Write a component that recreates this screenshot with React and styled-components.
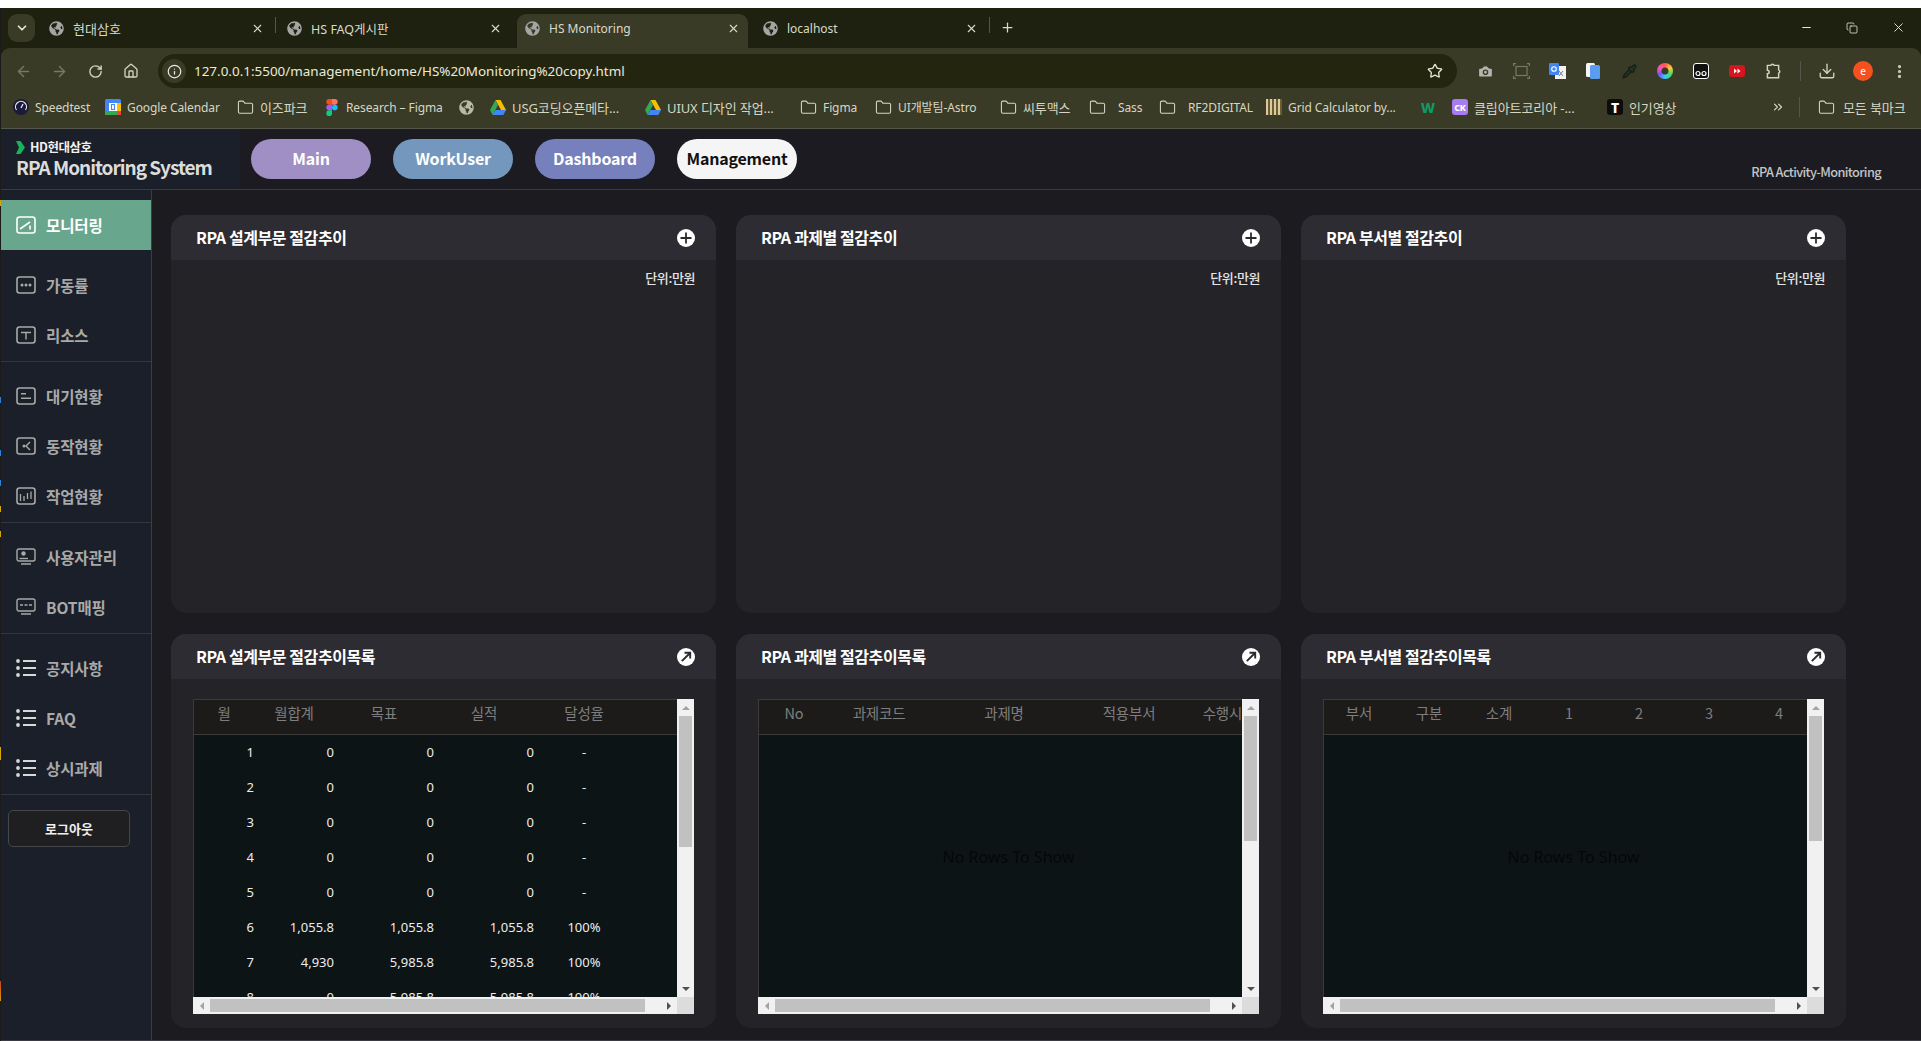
import React from 'react';
import styled, { createGlobalStyle } from 'styled-components';
import { ArrowLeft, ArrowRight, RotateCw, Home, Info, Star, Camera, Download, MoreVertical, Folder, ChevronDown, X, Plus, Minus, Copy, ChevronsRight, Pipette } from 'lucide-react';
import { FaGlobeAmericas } from 'react-icons/fa';

const Global = createGlobalStyle`
  html, body { margin: 0; padding: 0; background: #fff; overflow: hidden; }
  * { box-sizing: border-box; }
  #root { width: 1921px; height: 1041px; }
`;

const CJK = `"Noto Sans CJK KR", "Noto Sans", sans-serif`;
const UI = `"Noto Sans", "Noto Sans CJK KR", sans-serif`;

const Screen = styled.div`width: 1921px; height: 1041px; display: flex; flex-direction: column; overflow: hidden; background: #fff;`;
const TopGap = styled.div`height: 8px; background: #fff; flex: none;`;
const Desk = styled.div`flex: 1; display: flex; min-height: 0;`;
const Edge = styled.div`
  width: 1px; flex: none; background:
    linear-gradient(#d4a800,#d4a800) 0 192px/1px 6px no-repeat,
    linear-gradient(#2a80e0,#2a80e0) 0 389px/1px 6px no-repeat,
    linear-gradient(#2a80e0,#2a80e0) 0 442px/1px 6px no-repeat,
    linear-gradient(#2a80e0,#2a80e0) 0 472px/1px 6px no-repeat,
    linear-gradient(#d4a800,#d4a800) 0 498px/1px 6px no-repeat,
    linear-gradient(#d4a800,#d4a800) 0 523px/1px 6px no-repeat,
    linear-gradient(#d4a800,#d4a800) 0 739px/1px 13px no-repeat,
    linear-gradient(#c8401c,#d49a10) 0 973px/1px 20px no-repeat,
    #1b1b1b;
`;
const Win = styled.div`flex: 1; min-width: 0; display: flex; flex-direction: column; background: #1f2110;`;

/* tab strip */
const TabStrip = styled.div`height: 40px; flex: none; display: flex; align-items: flex-end; padding-left: 7px; color: #d9dac8;`;
const TabMenu = styled.div`width: 27px; height: 28px; margin: 0 6px 6px 0; border-radius: 9px; background: #3a3b26; display: flex; align-items: center; justify-content: center; color: #e6e6d8;`;
const Tab = styled.div`
  width: 231px; height: 34px; display: flex; align-items: center; padding: 0 0 6px 8px; gap: 9px;
  border-radius: 9px 9px 0 0; position: relative;
  background: ${p => (p.$active ? '#3a3b26' : 'transparent')};
  font: ${p => p.$fs || 12}px ${UI}; color: #d9dac8;
  svg.globe { color: #a3a6a3; flex: none; }
`;
const TabLabel = styled.span`flex: 1; white-space: nowrap; overflow: hidden;`;
const TabClose = styled.span`width: 30px; display: flex; justify-content: center; color: #d9dac8;`;
const TabSep = styled.div`width: 1px; height: 16px; margin: 0 3px 15px; background: ${p => (p.$hide ? 'transparent' : '#55564a')};`;
const NewTab = styled.div`margin: 0 0 13px 7px; display: flex; color: #d9dac8;`;
const WinCtrls = styled.div`margin: 0 0 13px auto; display: flex; align-items: center; color: #e6e6d8;`;
const WinBtn = styled.div`width: 46px; display: flex; justify-content: center;`;

/* toolbar */
const Chrome = styled.div`flex: none; height: 81px; background: #3a3b26; border-radius: 9px 9px 0 0; border-bottom: 1px solid #55564a; color: #d2d3bf;`;
const ToolRow = styled.div`height: 40px; padding: 6px 0 0 4px; display: flex; align-items: stretch;`;
const NavBtn = styled.div`width: 36px; display: flex; align-items: center; justify-content: center; color: ${p => (p.$dim ? '#77786a' : '#d2d3bf')};`;
const Address = styled.div`width: 1299px; margin: 0 10px 0 9px; border-radius: 17px; background: #23250f; display: flex; align-items: center; padding: 0 14px 0 4px; font: 13.45px ${UI}; color: #e9e9dc;`;
const InfoChip = styled.div`width: 24px; height: 24px; border-radius: 50%; background: #3a3b26; display: flex; align-items: center; justify-content: center; margin-right: 8px;`;
const Url = styled.span`flex: 1; white-space: nowrap;`;
const ToolSep = styled.div`width: 1px; height: 20px; align-self: center; margin: 0 8px 0 9px; background: #55564a;`;
const Avatar = styled.div`width: 20px; height: 20px; border-radius: 50%; background: #f4511e; color: #fff; font: 10px ${UI}; display: flex; align-items: center; justify-content: center;`;
const ColorRing = styled.div`width: 16px; height: 16px; border-radius: 50%; background: radial-gradient(circle, #3a3b26 0 3px, transparent 4px), conic-gradient(#f55, #fc3, #4d6, #3cf, #75f, #f5a, #f55);`;

const BookRow = styled.div`height: 40px; display: flex; align-items: center; padding: 0 0 2px 12px; font: 12px ${UI}; letter-spacing: -0.1px; color: #d6d6c4;`;
const Book = styled.div`width: ${p => p.$w}px; flex: none; display: flex; align-items: center; gap: ${p => p.$gap || 6}px; font-size: ${p => (p.$ko ? 13 : 12)}px; white-space: nowrap; overflow: hidden; svg { flex: none; }`;
const BookIcon = styled.div`width: 16px; height: 16px; flex: none; border-radius: ${p => p.$r || 3}px; background: ${p => p.$bg}; color: ${p => p.$c || '#fff'}; font: 800 ${p => p.$fs || 9}px ${UI}; display: flex; align-items: center; justify-content: center; overflow: hidden;`;
const BookSep = styled.div`width: 1px; height: 20px; margin: 0 18px 0 14px; background: #55564a;`;
const GridStripes = styled.div`width: 16px; height: 16px; flex: none; background: repeating-linear-gradient(90deg, #d8c9a0 0 2px, #6b5c30 2px 4px);`;
const WMark = styled.span`width: 16px; flex: none; color: #0f9a66; font: 800 14px ${UI};`;

/* page */
const Page = styled.div`flex: 1; min-height: 0; display: flex; flex-direction: column; background: #1b1b20; border-bottom: 1px solid #3a3a44;`;
const Header = styled.header`height: 61px; flex: none; display: flex; border-bottom: 1px solid #3a3a44; background: #1b1b21;`;
const Logo = styled.div`width: 239px; flex: none; background: #1a1f29; padding: 10px 0 0 15px; color: #e4e4e4;`;
const LogoTop = styled.div`display: flex; align-items: center; gap: 5px; font: 700 12.5px/16px ${CJK}; letter-spacing: -0.5px; color: #f2f2f2;`;
const LogoName = styled.div`font: 700 19px/24px ${CJK}; letter-spacing: -1.02px; color: #dcdcdc; white-space: nowrap;`;
const Pills = styled.nav`display: flex; gap: 22px; padding: 10px 0 0 11px;`;
const Pill = styled.div`width: 120px; height: 40px; border-radius: 20px; background: ${p => p.$bg}; color: ${p => p.$c || '#fff'}; font: 700 16px/38px ${CJK}; text-align: center; letter-spacing: -0.2px;`;
const HeaderNote = styled.div`margin-left: auto; padding: 34px 40px 0 0; font: 500 12.75px/18px ${CJK}; letter-spacing: -0.62px; color: #c4c4c4;`;

const Content = styled.div`flex: 1; min-height: 0; display: flex;`;
const Side = styled.aside`width: 151px; flex: none; background: #1a1f29; border-right: 1px solid #3a3d45;`;
const Group = styled.div`padding-top: 10px; border-bottom: 1px solid #33363d;`;
const Item = styled.div`
  height: 50px; display: flex; align-items: center; gap: 10px; padding: 0 0 ${p => (p.$active ? 0 : 2)}px 15px;
  margin-bottom: ${p => (p.$active ? 11 : 0)}px;
  background: ${p => (p.$active ? '#68a78e' : 'transparent')};
  color: ${p => (p.$active ? '#fff' : '#a9a9a9')};
  font: 700 15.5px ${CJK}; letter-spacing: -0.1px;
`;
const LogoutWrap = styled.div`padding: 15px 21px 0 7px;`;
const Logout = styled.div`height: 37px; border: 1px solid #44464c; border-radius: 5px; background: #1f1f21; color: #f0f0f0; font: 700 13px/35px ${CJK}; text-align: center;`;

const Main = styled.main`flex: 1; min-width: 0; padding: 25px 0 0 19px; display: grid; grid-template-columns: repeat(3, 545px); grid-template-rows: 398px 394px; column-gap: 20px; row-gap: 21px;`;
const Card = styled.section`border-radius: 15px; background: #232328; overflow: hidden; display: flex; flex-direction: column;`;
const CardHead = styled.div`height: 45px; flex: none; background: #2c2c32; display: flex; align-items: center; justify-content: space-between; padding: 0 21px 0 25px;`;
const CardTitle = styled.h3`margin: 0 0 2px; font: 700 16px ${CJK}; letter-spacing: -0.42px; color: #fff;`;
const Unit = styled.div`padding: 9px 21px 0 0; text-align: right; font: 500 13px/18px ${CJK}; letter-spacing: -0.4px; color: #e4e4e4;`;
const CardBody = styled.div`flex: 1; padding: 20px 22px 14px; min-height: 0;`;

const GridBox = styled.div`height: 315px; display: grid; grid-template-columns: 484px 17px; grid-template-rows: 298px 17px;`;
const Viewport = styled.div`overflow: hidden; border-left: 1px solid #3a3a3a; border-top: 1px solid #3a3a3a; background: #0c1416; display: flex; flex-direction: column;`;
const HeadRow = styled.div`height: 35px; flex: none; display: flex; background: #1c1b1a; border-bottom: 1px solid #3a3a3a;`;
const HeadCell = styled.div`width: ${p => p.$w}px; flex: none; padding-right: ${p => p.$pr || 0}px; text-align: center; font: 400 14.5px/26px ${CJK}; letter-spacing: -0.2px; color: #7e7e7e; white-space: nowrap;`;
const DataRow = styled.div`height: 35px; flex: none; display: flex; font: 400 13px/35px ${UI}; color: #ececec;`;
const DataCell = styled.div`width: ${p => p.$w}px; flex: none; padding-right: ${p => p.$pr || 0}px; text-align: ${p => p.$al || 'right'};`;
const Empty = styled.div`flex: 1; display: flex; align-items: center; justify-content: center; padding: 0 0 18px 16px; font: 400 16px ${UI}; color: #050808;`;

const VBar = styled.div`background: #f1f1f1; display: flex; flex-direction: column; align-items: center; padding-bottom: 0;`;
const HBar = styled.div`background: #f1f1f1; display: flex; align-items: center;`;
const Corner = styled.div`background: #dcdcdc;`;
const ArrowBox = styled.div`flex: none; width: ${p => p.$w}px; height: ${p => p.$h}px; display: flex; align-items: center; justify-content: center; margin-top: ${p => p.$mt || 0}px;`;
const Tri = styled.div`
  width: 0; height: 0;
  ${p => p.$dir === 'up' && `border-left: 4px solid transparent; border-right: 4px solid transparent; border-bottom: 4px solid ${p.$c};`}
  ${p => p.$dir === 'down' && `border-left: 4px solid transparent; border-right: 4px solid transparent; border-top: 4px solid ${p.$c};`}
  ${p => p.$dir === 'left' && `border-top: 4px solid transparent; border-bottom: 4px solid transparent; border-right: 4px solid ${p.$c};`}
  ${p => p.$dir === 'right' && `border-top: 4px solid transparent; border-bottom: 4px solid transparent; border-left: 4px solid ${p.$c};`}
`;
const VThumb = styled.div`width: 13px; height: ${p => p.$h}px; flex: none; background: #c1c1c1;`;
const HThumb = styled.div`width: 435px; height: 13px; flex: none; background: #c1c1c1;`;
const Spacer = styled.div`flex: 1;`;

/* icons */
const SideIcon = ({ kind }) => {
  const frame = <rect x="1" y="1" width="18" height="16" rx="2.5" fill="none" stroke="currentColor" strokeWidth="1.6" />;
  const inner = {
    monitor: <><path d="M4 13 L14 6" stroke="currentColor" strokeWidth="1.6" /><path d="M14 9.5 V13.5" stroke="currentColor" strokeWidth="1.6" /></>,
    dots: <><circle cx="6" cy="9" r="1.5" fill="currentColor" /><circle cx="10" cy="9" r="1.5" fill="currentColor" /><circle cx="14" cy="9" r="1.5" fill="currentColor" /></>,
    cross: <path d="M5 6.5 H15 M10 6.5 V13.5" stroke="currentColor" strokeWidth="1.4" fill="none" />,
    wait: <path d="M5 6.8 H10 M5 11.2 H15" stroke="currentColor" strokeWidth="1.4" fill="none" />,
    action: <><circle cx="8" cy="9" r="1.5" fill="currentColor" /><path d="M14 5 L10 9 L14 13" stroke="currentColor" strokeWidth="1.4" fill="none" /></>,
    bars: <path d="M4.5 7 V14 M8 9 V14 M11.5 6 V12 M15 4.5 V12" stroke="currentColor" strokeWidth="1.3" fill="none" />,
  };
  if (kind === 'user' || kind === 'bot') {
    return (
      <svg width="20" height="19" viewBox="0 0 20 19">
        <path d="M3 1 H17 a2 2 0 0 1 2 2 V11 a2 2 0 0 1 -2 2 H3 a2 2 0 0 1 -2 -2 V3 a2 2 0 0 1 2 -2 Z" fill="none" stroke="currentColor" strokeWidth="1.4" />
        <path d="M5 16 H15" stroke="currentColor" strokeWidth="1.5" />
        {kind === 'user'
          ? <><circle cx="7.5" cy="5.5" r="2.2" fill="currentColor" /><path d="M3.5 10.5 H12" stroke="currentColor" strokeWidth="1.4" /></>
          : <path d="M4 7 H7 M8.5 7 H11.5 M13 7 H16" stroke="currentColor" strokeWidth="1.3" />}
      </svg>
    );
  }
  if (kind === 'list') {
    return (
      <svg width="20" height="18" viewBox="0 0 20 18" style={{ color: '#d8d8d8' }}>
        <circle cx="2" cy="2" r="1.9" fill="currentColor" /><circle cx="2" cy="9" r="1.9" fill="currentColor" /><circle cx="2" cy="16" r="1.9" fill="currentColor" />
        <path d="M7 2 H20 M7 9 H20 M7 16 H20" stroke="currentColor" strokeWidth="2" />
      </svg>
    );
  }
  return <svg width="20" height="18" viewBox="0 0 20 18">{frame}{inner[kind]}</svg>;
};

const PlusIcon = () => (
  <svg width="18" height="18" viewBox="0 0 18 18"><circle cx="9" cy="9" r="9" fill="#fff" /><path d="M3.5 9 H14.5 M9 3.5 V14.5" stroke="#2b2b30" strokeWidth="1.8" /></svg>
);
const OpenIcon = () => (
  <svg width="18" height="18" viewBox="0 0 18 18"><circle cx="9" cy="9" r="9" fill="#fff" /><path d="M4.8 13.2 L12.5 5.5 M7.5 4.8 H13.2 V10.5" stroke="#2b2b30" strokeWidth="1.9" fill="none" /></svg>
);
const Globe = ({ size = 15 }) => <FaGlobeAmericas className="globe" size={size} />;
const FolderI = () => <Folder size={17} strokeWidth={1.5} />;
const FigmaI = () => (
  <svg width="12" height="17" viewBox="0 0 12 18" style={{ margin: '0 2px' }}>
    <path d="M6 0 H3 a3 3 0 0 0 0 6 H6 Z" fill="#f24e1e" /><path d="M6 0 H9 a3 3 0 0 1 0 6 H6 Z" fill="#ff7262" />
    <path d="M6 6 H3 a3 3 0 0 0 0 6 H6 Z" fill="#a259ff" /><circle cx="9" cy="9" r="3" fill="#1abcfe" />
    <path d="M6 12 H3 a3 3 0 1 0 3 3 Z" fill="#0acf83" />
  </svg>
);
const DriveI = () => (
  <svg width="16" height="15" viewBox="0 0 16 15">
    <path d="M5.5 0 H10.5 L16 10 H11 Z" fill="#fbbc04" /><path d="M5.5 0 L0 10 L2.6 15 L8 5 Z" fill="#34a853" /><path d="M2.6 15 H13.4 L16 10 H5.4 Z" fill="#4285f4" />
  </svg>
);
const SpeedI = () => (
  <svg width="16" height="16" viewBox="0 0 16 16"><circle cx="8" cy="8" r="8" fill="#1a1a3a" /><path d="M3.5 11 A5.5 5.5 0 1 1 12.5 11" stroke="#e8e8f0" strokeWidth="1.2" fill="none" /><path d="M8 9 L10 5" stroke="#e8e8f0" strokeWidth="1.2" /></svg>
);
const CalI = () => (
  <svg width="16" height="16" viewBox="0 0 16 16"><rect width="16" height="16" rx="1.5" fill="#4285f4" /><rect x="0" y="12" width="12" height="4" fill="#34a853" /><rect x="12" y="12" width="4" height="4" fill="#ea4335" /><rect x="12" y="4" width="4" height="8" fill="#fbbc04" /><rect x="4" y="4" width="8" height="8" fill="#fff" /><rect x="6.5" y="5.5" width="3" height="5" fill="none" stroke="#4285f4" strokeWidth="1.1" /></svg>
);
const CaptureI = () => (
  <svg width="17" height="16" viewBox="0 0 17 16" fill="none" stroke="#77786a" strokeWidth="1.2"><rect x="3" y="3.5" width="11" height="9" /><path d="M0.6 3 V0.6 H3 M14 0.6 H16.4 V3 M16.4 13 V15.4 H14 M3 15.4 H0.6 V13" /></svg>
);
const TranslateI = () => (
  <svg width="17" height="17" viewBox="0 0 17 17"><rect x="6" y="3" width="11" height="13" fill="#f1f1f1" /><rect width="10" height="12" rx="1" fill="#4285f4" /><circle cx="5" cy="6" r="2.3" fill="none" stroke="#fff" strokeWidth="1.1" /><path d="M10 8 L14 13 M14 8 L10 13" stroke="#7a7a7a" strokeWidth="1" /></svg>
);
const PagesI = () => (
  <svg width="14" height="16" viewBox="0 0 14 16"><rect x="0" y="0" width="9" height="14" rx="1.5" fill="#f5f5f5" /><rect x="4" y="2" width="10" height="14" rx="1.5" fill="#5b9bf0" /></svg>
);
const FaceI = () => (
  <svg width="16" height="16" viewBox="0 0 16 16"><rect x="0.5" y="0.5" width="15" height="15" rx="2.5" fill="#111" stroke="#fff" /><circle cx="5" cy="10.5" r="2" fill="none" stroke="#fff" strokeWidth="1.2" /><circle cx="11" cy="10.5" r="2" fill="none" stroke="#fff" strokeWidth="1.2" /></svg>
);
const RedI = () => (
  <svg width="16" height="12" viewBox="0 0 16 12"><rect width="16" height="12" rx="3" fill="#d8141c" /><path d="M5 3.5 L8 6 L5 8.5 Z M8.5 3.5 L11.5 6 L8.5 8.5 Z" fill="#fff" /></svg>
);
const PuzzleI = () => (
  <svg width="18" height="18" viewBox="0 0 16 16" fill="none" stroke="#d2d3bf" strokeWidth="1.3"><path d="M3 3 H6 a1.6 1.6 0 0 1 3 0 H13 V7 a1.6 1.6 0 0 1 0 3 V14 H3 V10.5 a1.6 1.6 0 0 0 0 -3.2 Z" /></svg>
);
const HdMark = () => <svg width="9" height="13" viewBox="0 0 9 13"><path d="M0 0 H4.5 L9 6.5 L4.5 13 H0 L3 6.5 Z" fill="#19b45a" /></svg>;

const TABS = [
  { t: '현대삼호', fs: 13 }, { t: 'HS FAQ게시판', fs: 12.5 }, { t: 'HS Monitoring', active: true }, { t: 'localhost' },
];

const BOOKS = [
  { w: 92, icon: <SpeedI />, t: 'Speedtest' },
  { w: 132, icon: <CalI />, t: 'Google Calendar' },
  { w: 87, icon: <FolderI />, t: '이즈파크', ko: true },
  { w: 135, icon: <FigmaI />, t: 'Research – Figma' },
  { w: 31, icon: <FaGlobeAmericas size={15} color="#b8b9aa" />, t: '' },
  { w: 155, icon: <DriveI />, t: 'USG코딩오픈메타...', ko: true },
  { w: 155, icon: <DriveI />, t: 'UIUX 디자인 작업...', ko: true },
  { w: 75, icon: <FolderI />, t: 'Figma' },
  { w: 125, icon: <FolderI />, t: 'UI개발팀-Astro' },
  { w: 89, icon: <FolderI />, t: '씨투맥스', ko: true },
  { w: 70, icon: <FolderI />, gap: 12, t: 'Sass' },
  { w: 107, icon: <FolderI />, gap: 12, t: 'RF2DIGITAL' },
  { w: 155, icon: <GridStripes />, t: 'Grid Calculator by...' },
  { w: 31, icon: <WMark>W</WMark>, t: '' },
  { w: 155, icon: <BookIcon $bg="#a77bf3">CK</BookIcon>, t: '클립아트코리아 -...', ko: true },
  { w: 164, icon: <BookIcon $bg="#0c0c0c" $r={0} $fs={14}>T</BookIcon>, t: '인기영상', ko: true },
];

const NAV = [
  [{ k: 'monitor', t: '모니터링', active: true }, { k: 'dots', t: '가동률' }, { k: 'cross', t: '리소스' }],
  [{ k: 'wait', t: '대기현황' }, { k: 'action', t: '동작현황' }, { k: 'bars', t: '작업현황' }],
  [{ k: 'user', t: '사용자관리' }, { k: 'bot', t: 'BOT매핑' }],
  [{ k: 'list', t: '공지사항' }, { k: 'list', t: 'FAQ' }, { k: 'list', t: '상시과제' }],
];

const ROWS = [
  ['1', '0', '0', '0', '-'], ['2', '0', '0', '0', '-'], ['3', '0', '0', '0', '-'], ['4', '0', '0', '0', '-'], ['5', '0', '0', '0', '-'],
  ['6', '1,055.8', '1,055.8', '1,055.8', '100%'], ['7', '4,930', '5,985.8', '5,985.8', '100%'], ['8', '0', '5,985.8', '5,985.8', '100%'],
];
const COLS1 = [
  { t: '월', w: 70, hp: 10, dp: 10 }, { t: '월합계', w: 80, hp: 20, dp: 10 }, { t: '목표', w: 100, hp: 20, dp: 10 },
  { t: '실적', w: 100, hp: 20, dp: 10 }, { t: '달성율', w: 80, hp: 0, dp: 0, al: 'center' },
];
const COLS2 = [{ t: 'No', w: 70 }, { t: '과제코드', w: 100 }, { t: '과제명', w: 150 }, { t: '적용부서', w: 100 }, { t: '수행시간', w: 100 }];
const COLS3 = ['부서', '구분', '소계', '1', '2', '3', '4'].map(t => ({ t, w: 70 }));

const DataGrid = ({ cols, rows, thumb }) => (
  <GridBox>
    <Viewport>
      <HeadRow>{cols.map(c => <HeadCell key={c.t} $w={c.w} $pr={c.hp}>{c.t}</HeadCell>)}</HeadRow>
      {rows
        ? rows.map(r => (
          <DataRow key={r[0]}>
            {r.map((v, i) => <DataCell key={i} $w={cols[i].w} $pr={cols[i].dp} $al={cols[i].al}>{v}</DataCell>)}
          </DataRow>
        ))
        : <Empty>No Rows To Show</Empty>}
    </Viewport>
    <VBar>
      <ArrowBox $w={17} $h={17}><Tri $dir="up" $c="#a3a3a3" /></ArrowBox>
      <VThumb $h={thumb} />
      <Spacer />
      <ArrowBox $w={17} $h={17}><Tri $dir="down" $c="#505050" /></ArrowBox>
    </VBar>
    <HBar>
      <ArrowBox $w={17} $h={17}><Tri $dir="left" $c="#a3a3a3" /></ArrowBox>
      <HThumb />
      <Spacer />
      <ArrowBox $w={17} $h={17}><Tri $dir="right" $c="#505050" /></ArrowBox>
    </HBar>
    <Corner />
  </GridBox>
);

const ChartCard = ({ title }) => (
  <Card>
    <CardHead><CardTitle>{title}</CardTitle><PlusIcon /></CardHead>
    <Unit>단위:만원</Unit>
  </Card>
);
const ListCard = ({ title, cols, rows, thumb }) => (
  <Card>
    <CardHead><CardTitle>{title}</CardTitle><OpenIcon /></CardHead>
    <CardBody><DataGrid cols={cols} rows={rows} thumb={thumb} /></CardBody>
  </Card>
);

export default function App() {
  return (
    <Screen>
      <Global />
      <TopGap />
      <Desk>
        <Edge />
        <Win>
          <TabStrip>
            <TabMenu><ChevronDown size={14} strokeWidth={3} /></TabMenu>
            {TABS.map((tab, i) => (
              <React.Fragment key={tab.t}>
                <Tab $active={tab.active} $fs={tab.fs}>
                  <Globe />
                  <TabLabel>{tab.t}</TabLabel>
                  <TabClose><X size={13} strokeWidth={2} /></TabClose>
                </Tab>
                <TabSep $hide={i === 1 || i === 2} />
              </React.Fragment>
            ))}
            <NewTab><Plus size={15} strokeWidth={2} /></NewTab>
            <WinCtrls>
              <WinBtn><Minus size={13} /></WinBtn>
              <WinBtn><Copy size={12} strokeWidth={1.6} /></WinBtn>
              <WinBtn><X size={15} strokeWidth={1.5} /></WinBtn>
            </WinCtrls>
          </TabStrip>
          <Chrome>
            <ToolRow>
              <NavBtn $dim><ArrowLeft size={17} /></NavBtn>
              <NavBtn $dim><ArrowRight size={17} /></NavBtn>
              <NavBtn><RotateCw size={15} strokeWidth={2.2} /></NavBtn>
              <NavBtn><Home size={16} strokeWidth={2} /></NavBtn>
              <Address>
                <InfoChip><Info size={15} strokeWidth={2} /></InfoChip>
                <Url>127.0.0.1:5500/management/home/HS%20Monitoring%20copy.html</Url>
                <Star size={16} strokeWidth={2} color="#e4e4d4" />
              </Address>
              <NavBtn><Camera size={17} fill="#b5b5b0" color="#3a3b26" /></NavBtn>
              <NavBtn><CaptureI /></NavBtn>
              <NavBtn><TranslateI /></NavBtn>
              <NavBtn><PagesI /></NavBtn>
              <NavBtn><Pipette size={15} strokeWidth={2.6} color="#10201a" /></NavBtn>
              <NavBtn><ColorRing /></NavBtn>
              <NavBtn><FaceI /></NavBtn>
              <NavBtn><RedI /></NavBtn>
              <NavBtn><PuzzleI /></NavBtn>
              <ToolSep />
              <NavBtn><Download size={18} strokeWidth={1.8} /></NavBtn>
              <NavBtn><Avatar>e</Avatar></NavBtn>
              <NavBtn><MoreVertical size={17} strokeWidth={2.5} /></NavBtn>
            </ToolRow>
            <BookRow>
              {BOOKS.map((b, i) => <Book key={i} $w={b.w} $gap={b.gap} $ko={b.ko}>{b.icon}{b.t}</Book>)}
              <ChevronsRight size={14} />
              <BookSep />
              <Book $w={90} $gap={8} $ko><FolderI />모든 북마크</Book>
            </BookRow>
          </Chrome>
          <Page>
            <Header>
              <Logo>
                <LogoTop><HdMark />HD현대삼호</LogoTop>
                <LogoName>RPA Monitoring System</LogoName>
              </Logo>
              <Pills>
                <Pill $bg="#a08fc4">Main</Pill>
                <Pill $bg="#7498bd">WorkUser</Pill>
                <Pill $bg="#7680bd">Dashboard</Pill>
                <Pill $bg="#f5f5f5" $c="#111">Management</Pill>
              </Pills>
              <HeaderNote>RPA Activity-Monitoring</HeaderNote>
            </Header>
            <Content>
              <Side>
                {NAV.map((g, gi) => (
                  <Group key={gi}>
                    {g.map(n => (
                      <Item key={n.t} $active={n.active}><SideIcon kind={n.k} />{n.t}</Item>
                    ))}
                  </Group>
                ))}
                <LogoutWrap><Logout>로그아웃</Logout></LogoutWrap>
              </Side>
              <Main>
                <ChartCard title="RPA 설계부문 절감추이" />
                <ChartCard title="RPA 과제별 절감추이" />
                <ChartCard title="RPA 부서별 절감추이" />
                <ListCard title="RPA 설계부문 절감추이목록" cols={COLS1} rows={ROWS} thumb={131} />
                <ListCard title="RPA 과제별 절감추이목록" cols={COLS2} thumb={125} />
                <ListCard title="RPA 부서별 절감추이목록" cols={COLS3} thumb={125} />
              </Main>
            </Content>
          </Page>
        </Win>
      </Desk>
    </Screen>
  );
}
